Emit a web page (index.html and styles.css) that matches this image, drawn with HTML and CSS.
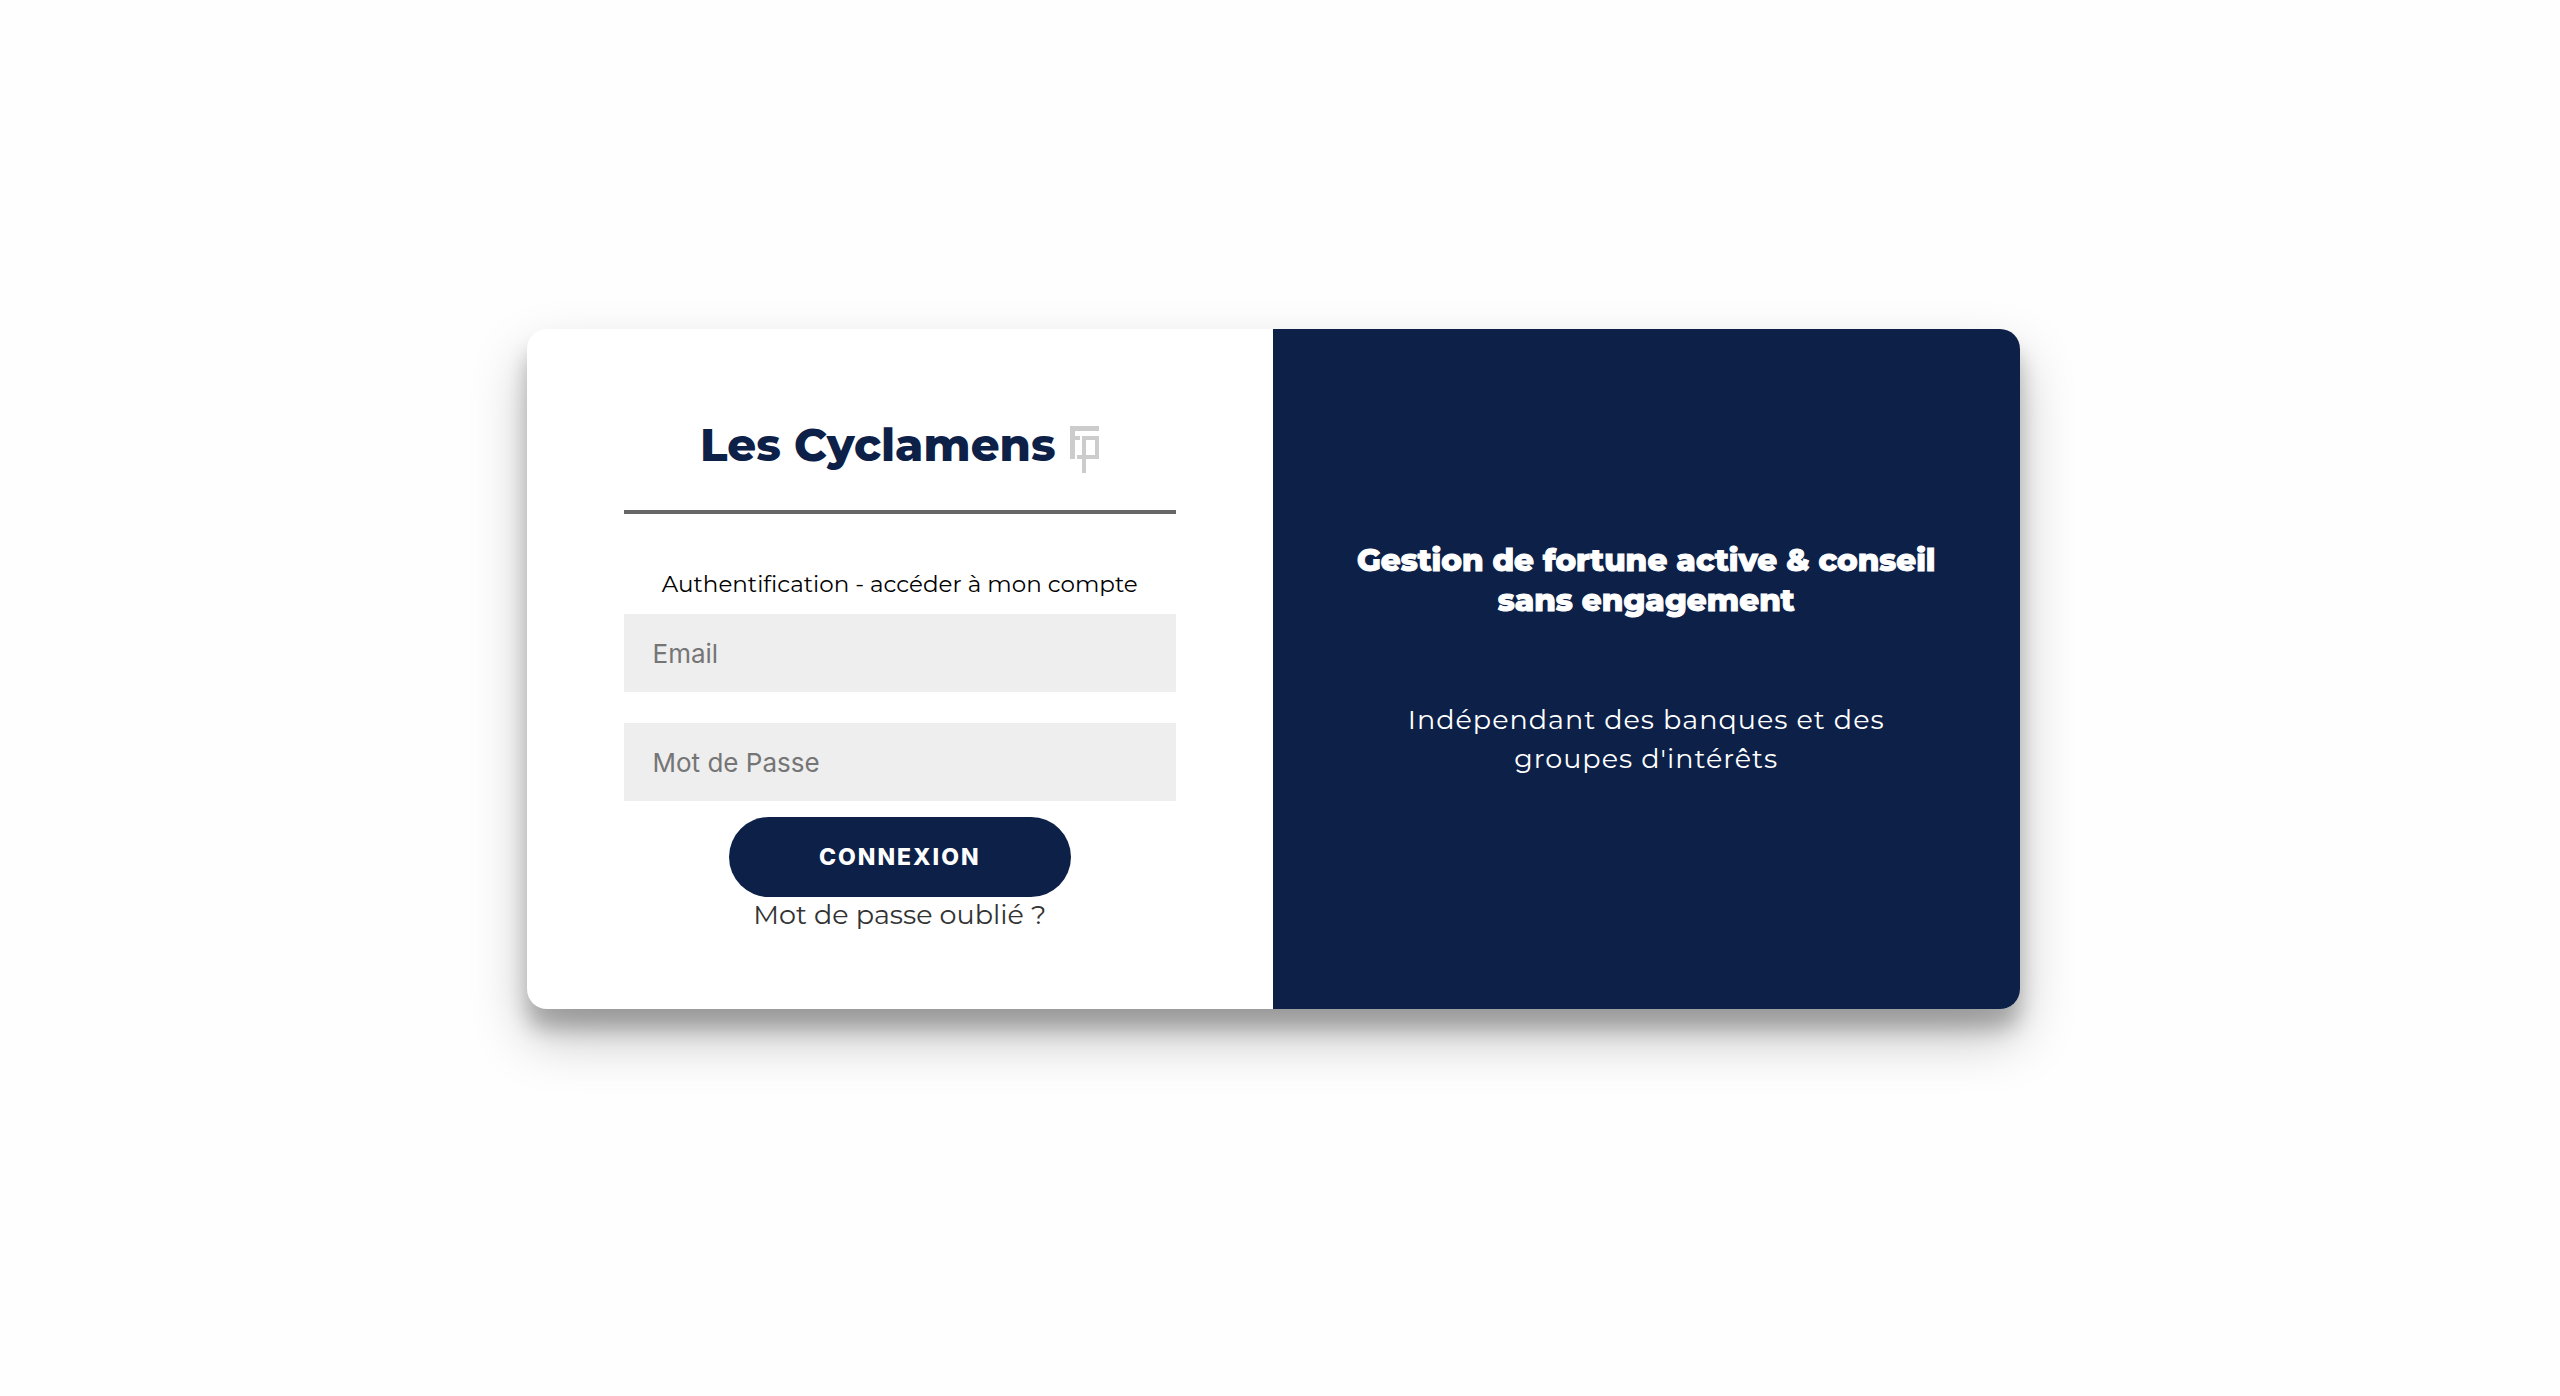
FILE: index.html
```html
<!DOCTYPE html>
<html lang="fr">

<head>
    <meta charset="UTF-8">
    <meta name="viewport" content="width=device-width, initial-scale=1.0">
    <title>Les Cyclamens | Connexion</title>
    <link rel="stylesheet" href="styles.css">
</head>

<body>
    <main class="container">
        <section class="form-container">
            <form class="login-form" action="#" method="post">
                <h1 class="brand">
                    Les Cyclamens
                    <svg class="brand-logo" viewBox="0 0 30 48" aria-hidden="true">
                        <path d="M0 0H29V5H5V10H10V14H5V33H0Z" />
                        <path d="M12 10H29V33H16V47H12V33H7V29H12ZM16 14V29H25V14Z" fill-rule="evenodd" />
                    </svg>
                </h1>
                <hr class="separator">
                <p class="form-intro">Authentification - accéder à mon compte</p>
                <input class="field" type="email" name="email" placeholder="Email" aria-label="Email">
                <input class="field" type="password" name="password" placeholder="Mot de Passe" aria-label="Mot de Passe">
                <button class="submit-btn" type="submit">Connexion</button>
                <a class="forgot-link" href="#">Mot de passe oublié ?</a>
            </form>
        </section>
        <section class="overlay">
            <h2 class="overlay-title">Gestion de fortune active &amp; conseil sans engagement</h2>
            <p class="overlay-text">Indépendant des banques et des groupes d'intérêts</p>
        </section>
    </main>
</body>

</html>
```
FILE: styles.css
```css
* {
    box-sizing: border-box;
}

body {
    margin: 0;
    min-height: 100vh;
    padding: 0 14px 58px 0;
    display: flex;
    align-items: center;
    justify-content: center;
    background: #fefefe;
    color: #000;
    font-family: Montserrat, Inter, sans-serif;
}

.container {
    display: grid;
    grid-template-columns: 1fr 1fr;
    width: 100%;
    max-width: 1493px;
    min-height: 680px;
    background: #fff;
    border-radius: 20px;
    overflow: hidden;
    box-shadow: 0 28px 54px rgba(0, 0, 0, 0.25), 0 20px 20px rgba(0, 0, 0, 0.22);
}

.form-container {
    display: flex;
    flex-direction: column;
    justify-content: center;
    padding: 11px 97px 0;
}

.login-form {
    display: flex;
    flex-direction: column;
    align-items: center;
}

.brand {
    display: flex;
    align-items: flex-end;
    gap: 14px;
    margin: 0;
    color: #0c2048;
    font-size: 45px;
    font-weight: 800;
    line-height: 58px;
}

.brand-logo {
    width: 30px;
    height: 48px;
    fill: #ccc;
}

.separator {
    width: 100%;
    height: 4px;
    margin: 36px 0 56px;
    border: 0;
    background: #666;
}

.form-intro {
    margin: 0 0 16px;
    font-size: 23px;
    line-height: 28px;
}

.field {
    width: 100%;
    height: 78px;
    margin: 0 0 31px;
    padding: 0 29px;
    border: none;
    border-radius: 0;
    background: #eee;
    font-family: Inter, sans-serif;
    font-size: 26px;
}

.field::placeholder {
    color: #757575;
}

.submit-btn {
    margin-top: -15px;
    padding: 24px 90px;
    border: none;
    border-radius: 40px;
    background: #0c2048;
    color: #fff;
    font-family: Inter, sans-serif;
    font-size: 23px;
    font-weight: 800;
    line-height: 32px;
    letter-spacing: 2px;
    text-transform: uppercase;
    cursor: pointer;
}

.forgot-link {
    color: #333;
    font-size: 27px;
    line-height: 36px;
    text-decoration: none;
}

.overlay {
    display: flex;
    flex-direction: column;
    align-items: center;
    justify-content: center;
    padding: 20px 78px 0;
    background: #0c2048;
    color: #fff;
    text-align: center;
}

.overlay-title {
    margin: 0;
    font-size: 31px;
    font-weight: 800;
    line-height: 40px;
    -webkit-text-stroke: 1px #fff;
}

.overlay-text {
    margin: 80px 0 40px;
    font-size: 27px;
    line-height: 39px;
    letter-spacing: 1px;
}
```
